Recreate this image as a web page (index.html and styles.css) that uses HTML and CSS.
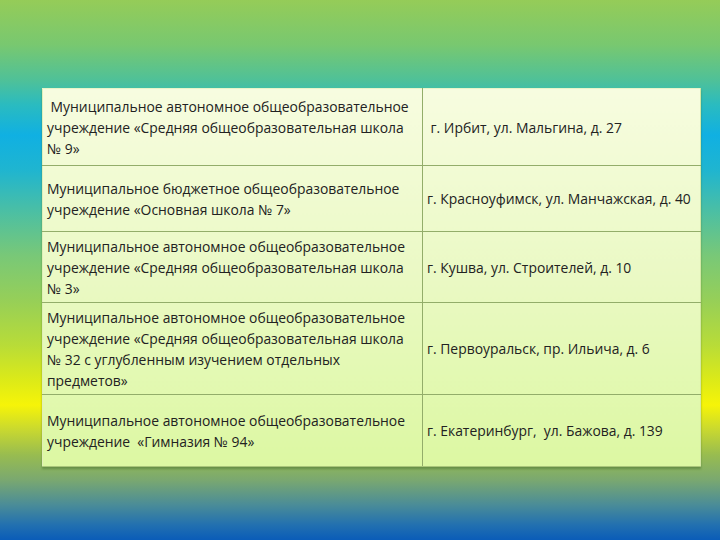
FILE: index.html
```html
<!DOCTYPE html>
<html lang="ru">
<head>
<meta charset="utf-8">
<link rel="stylesheet" href="styles.css">
</head>
<body>
<div class="slide">
  <table class="schools">
    <tr class="r1">
      <td class="name">&nbsp;Муниципальное автономное общеобразовательное учреждение «Средняя общеобразовательная школа № 9»</td>
      <td class="addr">&nbsp;г. Ирбит, ул. Мальгина, д. 27</td>
    </tr>
    <tr class="r2">
      <td class="name">Муниципальное бюджетное общеобразовательное учреждение «Основная школа № 7»</td>
      <td class="addr">г. Красноуфимск, ул. Манчажская, д. 40</td>
    </tr>
    <tr class="r3">
      <td class="name">Муниципальное автономное общеобразовательное учреждение «Средняя общеобразовательная школа № 3»</td>
      <td class="addr">г. Кушва, ул. Строителей, д. 10</td>
    </tr>
    <tr class="r4">
      <td class="name">Муниципальное автономное общеобразовательное учреждение «Средняя общеобразовательная школа № 32 с углубленным изучением отдельных предметов»</td>
      <td class="addr">г. Первоуральск, пр. Ильича, д. 6</td>
    </tr>
    <tr class="r5">
      <td class="name">Муниципальное автономное общеобразовательное учреждение &nbsp;«Гимназия № 94»</td>
      <td class="addr">г. Екатеринбург, &nbsp;ул. Бажова, д. 139</td>
    </tr>
  </table>
</div>
</body>
</html>
```
FILE: styles.css
```css
html, body {
  margin: 0;
  padding: 0;
}
.slide {
  width: 720px;
  height: 540px;
  box-sizing: border-box;
  padding: 88px 0 0 42px;
  background: linear-gradient(to bottom,
    #95cc58 0px,
    #78c870 45px,
    #4fc198 80px,
    #2abbc0 105px,
    #10b0e2 135px,
    #1fb5d0 170px,
    #4fc0a0 215px,
    #78c878 255px,
    #96cf58 300px,
    #b8dc38 345px,
    #dcea18 380px,
    #f6f408 405px,
    #c8d830 430px,
    #98bc50 455px,
    #7aa870 480px,
    #4a8c98 505px,
    #2270b0 525px,
    #0a5cb8 540px);
  font-family: "Open Sans", "Liberation Sans", sans-serif;
}
.schools {
  border-collapse: collapse;
  width: 659px;
  background: linear-gradient(to bottom, #f7fce0 0%, #eaf9c4 50%, #dcf8a2 100%);
  box-shadow: 0 2px 2px rgba(60, 100, 40, 0.45);
  color: #222;
  font-size: 13.9px;
  line-height: 21px;
}
.schools td {
  border: 1px solid #93ad6a;
  vertical-align: middle;
  padding: 0 4px 0 4px;
}
.schools tr:first-child td {
  border-top-color: #e9f5c8;
}
.schools td:first-child {
  border-left-color: #e0efb8;
}
.schools td:last-child {
  border-right-color: #d4e8a4;
}
.schools tr:last-child td {
  border-bottom-color: #a9c67a;
}
.name {
  width: 371px;
}
.addr {
  padding-left: 5px;
}
.r1 td { height: 76px; }
.r2 td { height: 65px; }
.r3 td { height: 70px; }
.r4 td { height: 91px; }
.r5 td { height: 71px; }
```
